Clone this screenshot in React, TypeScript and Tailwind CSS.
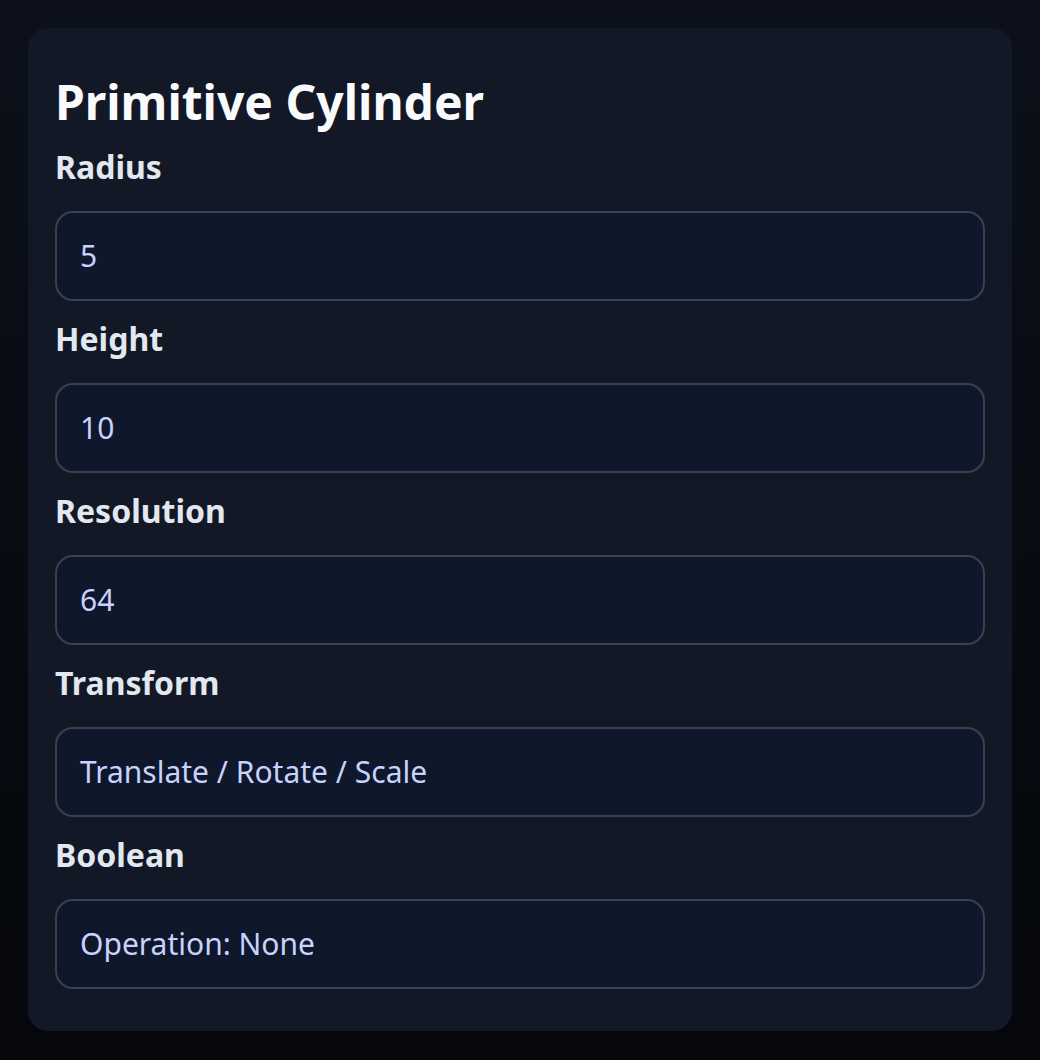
import React from "react";

const fields = [
  { label: "Radius", value: "5" },
  { label: "Height", value: "10" },
  { label: "Resolution", value: "64" },
  { label: "Transform", value: "Translate / Rotate / Scale" },
  { label: "Boolean", value: "Operation: None" },
];

export default function App() {
  return (
    <div
      className="min-h-screen bg-gradient-to-b from-[#0c101a] to-[#05070b] p-7"
      style={{ fontFamily: '"Noto Sans", "Open Sans", sans-serif' }}
    >
      <div className="rounded-[20px] bg-[#121826] px-[27px] pt-[50px] pb-[42px]">
        <h1 className="mb-[23px] text-5xl leading-[48px] font-bold text-[#f8fafc]">
          Primitive Cylinder
        </h1>
        <div className="flex flex-col gap-[20px]">
          {fields.map((f) => (
            <div key={f.label} className="flex flex-col">
              <label className="mb-[26px] text-[32px] leading-9 font-bold text-[#e2e8f0]">
                {f.label}
              </label>
              <div className="h-[90px] rounded-[18px] border-2 border-[#374151] bg-[#0f172a] px-[23px] flex items-center text-3xl text-[#c7d2fe]">
                {f.value}
              </div>
            </div>
          ))}
        </div>
      </div>
    </div>
  );
}
